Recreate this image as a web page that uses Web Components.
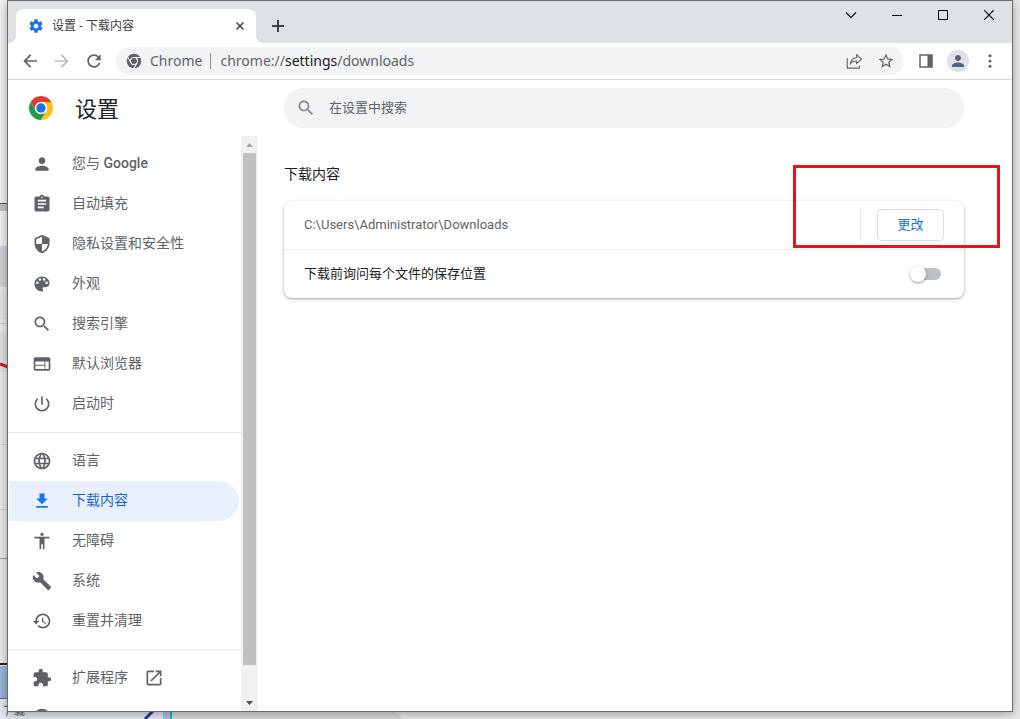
<!DOCTYPE html>
<html lang="zh-CN">
<head>
<meta charset="utf-8">
<meta name="viewport" content="width=device-width, initial-scale=1">
<title>设置 - 下载内容</title>
<style>
  html, body { height: 100%; margin: 0; }
  body {
    font-family: Roboto, "Noto Sans CJK SC", sans-serif;
    font-size: 14px; font-weight: 400; line-height: 20px;
    color: #202124; background: #ebebeb; overflow: hidden;
  }
  menu-item b { font-weight: 500; }
</style>
</head>
<body>
<desktop-view>
  <desktop-backdrop slot="backdrop"></desktop-backdrop>
  <browser-window>
    <tab-strip slot="tabs">设置 - 下载内容</tab-strip>
    <browser-toolbar slot="toolbar"></browser-toolbar>
    <settings-page>
      <settings-menu slot="menu">
        <menu-item icon="person">您与 <b>Google</b></menu-item>
        <menu-item icon="assignment">自动填充</menu-item>
        <menu-item icon="security">隐私设置和安全性</menu-item>
        <menu-item icon="palette">外观</menu-item>
        <menu-item icon="search">搜索引擎</menu-item>
        <menu-item icon="web">默认浏览器</menu-item>
        <menu-item icon="power">启动时</menu-item>
        <menu-separator></menu-separator>
        <menu-item icon="language">语言</menu-item>
        <menu-item icon="download" active>下载内容</menu-item>
        <menu-item icon="accessibility">无障碍</menu-item>
        <menu-item icon="build">系统</menu-item>
        <menu-item icon="restore">重置并清理</menu-item>
        <menu-separator></menu-separator>
        <menu-item icon="extension" external>扩展程序</menu-item>
        <menu-item icon="chromeMono"></menu-item>
      </settings-menu>
      <downloads-section></downloads-section>
    </settings-page>
  </browser-window>
</desktop-view>

<script>
const ICONS = {
  person: '<path d="M12 12c2.21 0 4-1.79 4-4s-1.79-4-4-4-4 1.79-4 4 1.79 4 4 4zm0 2c-2.67 0-8 1.34-8 4v2h16v-2c0-2.66-5.33-4-8-4z"/>',
  assignment: '<path d="M19 3h-4.18C14.4 1.84 13.3 1 12 1c-1.3 0-2.4.84-2.82 2H5c-1.1 0-2 .9-2 2v14c0 1.1.9 2 2 2h14c1.1 0 2-.9 2-2V5c0-1.1-.9-2-2-2zm-7 0c.55 0 1 .45 1 1s-.45 1-1 1-1-.45-1-1 .45-1 1-1zm2 14H7v-2h7v2zm3-4H7v-2h10v2zm0-4H7V7h10v2z"/>',
  security: '<path d="M12 1L3 5v6c0 5.55 3.84 10.74 9 12 5.16-1.26 9-6.45 9-12V5l-9-4zm0 10.99h7c-.53 4.12-3.28 7.79-7 8.94V12H5V6.3l7-3.11v8.8z"/>',
  palette: '<path d="M12 3c-4.97 0-9 4.03-9 9s4.03 9 9 9c.83 0 1.5-.67 1.5-1.5 0-.39-.15-.74-.39-1.01-.23-.26-.38-.61-.38-.99 0-.83.67-1.5 1.5-1.5H16c2.76 0 5-2.24 5-5 0-4.42-4.03-8-9-8zm-5.5 9c-.83 0-1.5-.67-1.5-1.5S5.67 9 6.5 9 8 9.67 8 10.5 7.33 12 6.5 12zm3-4C8.67 8 8 7.33 8 6.5S8.67 5 9.5 5s1.5.67 1.5 1.5S10.33 8 9.5 8zm5 0c-.83 0-1.5-.67-1.5-1.5S13.67 5 14.5 5s1.5.67 1.5 1.5S15.33 8 14.5 8zm3 4c-.83 0-1.5-.67-1.5-1.5S16.67 9 17.5 9s1.5.67 1.5 1.5-.67 1.5-1.5 1.5z"/>',
  search: '<path d="M15.5 14h-.79l-.28-.27C15.41 12.59 16 11.11 16 9.5 16 5.91 13.09 3 9.5 3S3 5.91 3 9.5 5.91 16 9.5 16c1.61 0 3.09-.59 4.23-1.57l.27.28v.79l5 4.99L20.49 19l-4.99-5zm-6 0C7.01 14 5 11.99 5 9.5S7.01 5 9.5 5 14 7.01 14 9.5 11.99 14 9.5 14z"/>',
  web: '<path d="M20 4H4c-1.1 0-1.99.9-1.99 2L2 18c0 1.1.9 2 2 2h16c1.1 0 2-.9 2-2V6c0-1.1-.9-2-2-2zm-5 14H4v-4h11v4zm0-5H4V9h11v4zm5 5h-4V9h4v9z"/>',
  power: '<path d="M13 3h-2v10h2V3zm4.83 2.17l-1.42 1.42C17.99 7.86 19 9.81 19 12c0 3.87-3.13 7-7 7s-7-3.13-7-7c0-2.19 1.01-4.14 2.58-5.42L6.17 5.17C4.23 6.82 3 9.26 3 12c0 4.97 4.03 9 9 9s9-4.03 9-9c0-2.74-1.23-5.18-3.17-6.83z"/>',
  language: '<path d="M11.99 2C6.47 2 2 6.48 2 12s4.47 10 9.99 10C17.52 22 22 17.52 22 12S17.52 2 11.99 2zm6.93 6h-2.95c-.32-1.25-.78-2.45-1.38-3.56 1.84.63 3.37 1.91 4.33 3.56zM12 4.04c.83 1.2 1.48 2.53 1.91 3.96h-3.82c.43-1.43 1.08-2.76 1.91-3.96zM4.26 14C4.1 13.36 4 12.69 4 12s.1-1.36.26-2h3.38c-.08.66-.14 1.32-.14 2 0 .68.06 1.34.14 2H4.26zm.82 2h2.95c.32 1.25.78 2.45 1.38 3.56-1.84-.63-3.37-1.9-4.33-3.56zm2.95-8H5.08c.96-1.66 2.49-2.93 4.33-3.56C8.81 5.55 8.35 6.75 8.03 8zM12 19.96c-.83-1.2-1.48-2.53-1.91-3.96h3.82c-.43 1.43-1.08 2.76-1.91 3.96zM14.34 14H9.66c-.09-.66-.16-1.32-.16-2 0-.68.07-1.35.16-2h4.68c.09.65.16 1.32.16 2 0 .68-.07 1.34-.16 2zm.25 5.56c.6-1.11 1.06-2.31 1.38-3.56h2.95c-.96 1.65-2.49 2.93-4.33 3.56zM16.36 14c.08-.66.14-1.32.14-2 0-.68-.06-1.34-.14-2h3.38c.16.64.26 1.31.26 2s-.1 1.36-.26 2h-3.38z"/>',
  download: '<path d="M19 9h-4V3H9v6H5l7 7 7-7zM5 18v2h14v-2H5z"/>',
  accessibility: '<path d="M12 2c1.1 0 2 .9 2 2s-.9 2-2 2-2-.9-2-2 .9-2 2-2zm9 7h-6v13h-2v-6h-2v6H9V9H3V7h18v2z"/>',
  build: '<path d="M22.7 19l-9.1-9.1c.9-2.3.4-5-1.5-6.9-2-2-5-2.4-7.4-1.3L9 6 6 9 1.6 4.7C.4 7.1.9 10.1 2.9 12.1c1.9 1.9 4.6 2.4 6.9 1.5l9.1 9.1c.4.4 1 .4 1.4 0l2.3-2.3c.5-.4.5-1.1.1-1.4z"/>',
  restore: '<path d="M13 3c-4.97 0-9 4.03-9 9H1l3.89 3.89.07.14L9 12H6c0-3.87 3.13-7 7-7s7 3.13 7 7-3.13 7-7 7c-1.93 0-3.68-.79-4.94-2.06l-1.42 1.42C8.27 19.99 10.51 21 13 21c4.97 0 9-4.03 9-9s-4.03-9-9-9zm-1 5v5l4.28 2.54.72-1.21-3.5-2.08V8H12z"/>',
  extension: '<path d="M20.5 11H19V7c0-1.1-.9-2-2-2h-4V3.5C13 2.12 11.88 1 10.5 1S8 2.12 8 3.5V5H4c-1.1 0-1.99.9-1.99 2v3.8H3.5c1.49 0 2.7 1.21 2.7 2.7s-1.21 2.7-2.7 2.7H2V20c0 1.1.9 2 2 2h3.8v-1.5c0-1.49 1.21-2.7 2.7-2.7 1.49 0 2.7 1.21 2.7 2.7V22H17c1.1 0 2-.9 2-2v-4h1.5c1.38 0 2.5-1.12 2.5-2.5S21.88 11 20.5 11z"/>',
  open: '<path d="M19 19H5V5h7V3H5c-1.11 0-2 .9-2 2v14c0 1.1.89 2 2 2h14c1.1 0 2-.9 2-2v-7h-2v7zM14 3v2h3.59l-9.83 9.83 1.41 1.41L19 6.41V10h2V3h-7z"/>',
  gear: '<path d="M19.43 12.98c.04-.32.07-.64.07-.98s-.03-.66-.07-.98l2.11-1.65c.19-.15.24-.42.12-.64l-2-3.46c-.12-.22-.39-.3-.61-.22l-2.49 1c-.52-.4-1.08-.73-1.69-.98l-.38-2.65C14.46 2.18 14.25 2 14 2h-4c-.25 0-.46.18-.49.42l-.38 2.65c-.61.25-1.17.59-1.69.98l-2.49-1c-.23-.09-.49 0-.61.22l-2 3.46c-.13.22-.07.49.12.64l2.11 1.65c-.04.32-.07.65-.07.98s.03.66.07.98l-2.11 1.65c-.19.15-.24.42-.12.64l2 3.46c.12.22.39.3.61.22l2.49-1c.52.4 1.08.73 1.69.98l.38 2.65c.03.24.24.42.49.42h4c.25 0 .46-.18.49-.42l.38-2.65c.61-.25 1.17-.59 1.69-.98l2.49 1c.23.09.49 0 .61-.22l2-3.46c.12-.22.07-.49-.12-.64l-2.11-1.65zM12 15.5c-1.93 0-3.5-1.57-3.5-3.5s1.57-3.5 3.5-3.5 3.5 1.57 3.5 3.5-1.57 3.5-3.5 3.5z"/>',
  back: '<path d="M20.5 11H7.83l5.59-5.59L12 4l-8 8 8 8 1.41-1.41L7.83 13H20.5z"/>',
  forward: '<path d="M3.5 11h12.67l-5.59-5.59L12 4l8 8-8 8-1.41-1.41L16.17 13H3.5z"/>',
  reload: '<path d="M17.65 6.35C16.2 4.9 14.21 4 12 4c-4.42 0-7.99 3.58-7.99 8s3.57 8 7.99 8c3.73 0 6.84-2.55 7.73-6h-2.08c-.82 2.33-3.04 4-5.65 4-3.31 0-6-2.69-6-6s2.69-6 6-6c1.66 0 3.14.69 4.22 1.78L13 11h7V4l-2.35 2.35z"/>',
  star: '<path d="M22 9.24l-7.19-.62L12 2 9.19 8.63 2 9.24l5.46 4.73L5.82 21 12 17.27 18.18 21l-1.63-7.03L22 9.24zM12 15.4l-3.76 2.27 1-4.28-3.32-2.88 4.38-.38L12 6.1l1.71 4.04 4.38.38-3.32 2.88 1 4.28L12 15.4z"/>',
  share: '<g fill="none" stroke="currentColor" stroke-width="1.5"><path d="M3 8v13.500h16v-3.500"/><path d="M15.500 3.500l6.500 6-6.500 6v-3.500c-4.500 0-7 1.300-8.500 4.200.5-5 3.500-8 8.500-8.800z" stroke-linejoin="round"/></g>',
  side: '<path fill-rule="evenodd" d="M3 3h18v18H3zm2 2v14h9V5z"/>',
  dots: '<circle cx="12" cy="5" r="2"/><circle cx="12" cy="12" r="2"/><circle cx="12" cy="19" r="2"/>',
  close: '<path d="M5 5l14 14M19 5L5 19" stroke="currentColor" stroke-width="3"/>',
  plus: '<path d="M12 3v18M3 12h18" stroke="currentColor" stroke-width="3"/>',
  chromeMono: '<circle cx="12" cy="12" r="11"/><g fill="none" stroke="var(--cut,#fff)" stroke-width="1.7"><circle cx="12" cy="12" r="5.3"/><path d="M12 6.700h11M7.400 14.600L2 5.200M16.600 14.600L11.200 24"/></g>',
  chrome: '<g><path fill="#e33b2e" d="M12 6h10.390A12 12 0 0 0 1.610 6L6.800 15A6 6 0 0 1 12 6z"/><path fill="#279847" d="M17.200 15L12 24A12 12 0 0 1 1.610 6L6.800 15a6 6 0 0 0 10.400 0z"/><path fill="#fcc219" d="M22.390 6A12 12 0 0 1 12 24l5.200-9A6 6 0 0 0 12 6z"/><circle cx="12" cy="12" r="5.900" fill="#fff"/><circle cx="12" cy="12" r="4.700" fill="#1a73e8"/></g>',
};
const svg = (name, size) =>
  `<svg width="${size}" height="${size}" viewBox="0 0 24 24" fill="currentColor" aria-hidden="true">${ICONS[name]}</svg>`;

const BASE = `:host,*{box-sizing:border-box} svg{display:block;flex:none}
  button{font:inherit;color:inherit;border:0;padding:0;margin:0;background:none;display:grid;place-items:center}`;

function define(tag, render) {
  customElements.define(tag, class extends HTMLElement {
    constructor() { super(); this.attachShadow({ mode: 'open' }); }
    connectedCallback() {
      const t = document.createElement('template');
      t.innerHTML = `<style>${BASE}</style>` + render(this);
      this.shadowRoot.replaceChildren(t.content.cloneNode(true));
    }
  });
}

define('desktop-view', () => `
  <style>
    :host{display:flex;position:relative;height:100vh;padding:0 7px 7px;overflow:hidden}
    ::slotted(browser-window){flex:1}
    ::slotted(desktop-backdrop){position:absolute;inset:0}
  </style>
  <slot name="backdrop"></slot><slot></slot>`);

/* Edges of the other windows that show around the browser. */
define('desktop-backdrop', () => `
  <style>
    :host{display:block}
    .edge{width:100%;height:100%}
    text{font:italic 12px "Noto Sans CJK SC",sans-serif;fill:#555}
  </style>
  <svg class="edge" aria-hidden="true">
    <rect width="8" height="204" fill="#f3f3f3"/>
    <rect y="203" width="8" height="1" fill="#555"/>
    <rect y="204" width="8" height="7" fill="#c4c4c4"/>
    <rect y="211" width="8" height="35" fill="#f1f1f1"/>
    <rect y="246" width="8" height="41" fill="#cfd3d9"/>
    <rect y="291" width="8" height="28" fill="#e3e5e8"/>
    <rect y="323" width="8" height="1" fill="#c8c8c8"/>
    <rect y="332" width="8" height="40" fill="#e1e3e6"/>
    <path d="M0 364l8 3" stroke="#e0101a" stroke-width="3"/>
    <path d="M0 444.500h8M0 509.500h8" stroke="#d5d5d5"/>
    <rect y="558" width="8" height="1" fill="#999"/>
    <rect y="663" width="8" height="2" fill="#222"/>
    <rect y="666" width="8" height="32" fill="#9db7d8"/>
    <rect y="698" width="8" height="1" fill="#667"/>
    <rect y="699" width="163" height="20" fill="#e4ebf5"/>
    <rect x="163" y="705" width="8" height="14" fill="#b0c8e4"/>
    <rect x="170" y="705" width="2" height="14" fill="#16b4d0"/>
    <rect x="172" y="705" width="848" height="14" fill="#ebebeb"/>
    <path d="M172 719v-7h223l8 7z" fill="#dcdcdc"/>
    <path d="M145 719l8-8" stroke="#2a3b90" stroke-width="3"/>
    <text x="1" y="715">下载</text>
  </svg>`);

define('browser-window', () => `
  <style>
    :host{display:flex;flex-direction:column;position:relative;min-width:0;background:#fff;
      border:1px solid #6b6b6b;box-shadow:0 2px 10px rgba(0,0,0,.35);overflow:hidden}
    ::slotted(settings-page){flex:1;min-height:0}
  </style>
  <slot name="tabs"></slot><slot name="toolbar"></slot><slot></slot>`);

define('tab-strip', () => `
  <style>
    :host{display:flex;height:42px;background:#dee1e6;padding-left:8px;color:#3c4043}
    .tab{position:relative;display:flex;align-items:center;align-self:flex-end;width:240px;height:34px;
      padding:0 8px 0 12px;gap:8px;background:#fff;border-radius:8px 8px 0 0;
      font-family:"Open Sans","Noto Sans CJK SC",sans-serif;font-size:12px}
    .tab::before,.tab::after{content:"";position:absolute;bottom:0;width:8px;height:8px}
    .tab::before{left:-8px;background:radial-gradient(circle at 0 0,transparent 8px,#fff 8px)}
    .tab::after{right:-8px;background:radial-gradient(circle at 100% 0,transparent 8px,#fff 8px)}
    .title{flex:1}
    .gear{color:#1a73e8}
    button{width:16px;height:16px}
    .new{width:28px;height:28px;margin:11px 0 0 8px}
    .controls{display:flex;margin-left:auto;color:#000}
    .controls button{width:46px;height:28px}
  </style>
  <div class="tab"><span class="gear">${svg('gear', 16)}</span><span class="title"><slot></slot></span>
    <button aria-label="关闭标签页">${svg('close', 12)}</button></div>
  <button class="new" aria-label="新标签页">${svg('plus', 16)}</button>
  <div class="controls">
    <button aria-label="搜索标签页"><svg width="12" height="12" fill="none" stroke="#111" stroke-width="1.2"><path d="M1 3.500l5 5 5-5"/></svg></button>
    <button aria-label="最小化"><svg width="10" height="10" fill="none" stroke="#000"><path d="M0 5.500h10"/></svg></button>
    <button aria-label="最大化"><svg width="10" height="10" fill="none" stroke="#000"><path d="M.5.5h9v9h-9z"/></svg></button>
    <button aria-label="关闭"><svg width="10" height="10" fill="none" stroke="#000" stroke-width="1.2"><path d="M0 0l10 10M10 0L0 10"/></svg></button>
  </div>`);

define('browser-toolbar', () => `
  <style>
    :host{display:flex;align-items:center;height:37px;padding:0 6px;border-bottom:1px solid #d9dadc;color:#5f6368}
    button{width:32px;height:28px}
    button:disabled{color:#babcbe}
    .omni{--cut:#f1f3f4;display:flex;align-items:center;flex:1;height:28px;margin:0 6px;padding:0 2px 0 10px;
      background:#f1f3f4;border-radius:14px;font:14px/20px "Noto Sans","Noto Sans CJK SC",sans-serif}
    .name{margin-left:8px;padding-right:8px}
    .rule{width:1px;height:16px;background:#8f9398}
    .url{flex:1;margin-left:9px;outline:0;white-space:nowrap}
    .url b{font-weight:400;color:#202124}
    .avatar span{display:grid;place-items:center;width:22px;height:22px;border-radius:50%;background:#dee1e6;color:#56607a}
  </style>
  <button aria-label="后退">${svg('back', 20)}</button>
  <button aria-label="前进" disabled>${svg('forward', 20)}</button>
  <button aria-label="重新加载">${svg('reload', 20)}</button>
  <div class="omni">${svg('chromeMono', 16)}<span class="name">Chrome</span><span class="rule"></span>
    <div class="url" role="textbox" aria-label="地址" contenteditable="true" spellcheck="false">chrome://<b>settings</b>/downloads</div>
    <button aria-label="分享">${svg('share', 18)}</button>
    <button aria-label="加入书签">${svg('star', 18)}</button></div>
  <button aria-label="侧边栏">${svg('side', 18)}</button>
  <button class="avatar" aria-label="个人资料"><span>${svg('person', 18)}</span></button>
  <button aria-label="更多">${svg('dots', 18)}</button>`);

define('settings-page', () => `
  <style>
    :host{display:grid;grid-template:56px minmax(0,1fr) / 250px minmax(0,1fr)}
    header{display:flex;align-items:center;gap:22px;padding-left:21px}
    h1{margin:0;padding-top:3px;font-size:22px;font-weight:400;line-height:32px}
    .search{display:flex;align-items:center;align-self:center;gap:13px;height:40px;margin:0 48px 0 26px;
      padding:0 20px 0 12px;border-radius:20px;background:#f1f3f4;color:#80868b}
    input{flex:1;min-width:0;border:0;outline:0;padding:0;background:none;font:inherit;font-size:13px;color:#202124}
    input::placeholder{color:#5f6368;opacity:1}
    main{padding:27px 48px 0 26px}
  </style>
  <header>${svg('chrome', 24)}<h1>设置</h1></header>
  <div class="search">${svg('search', 20)}<input type="search" aria-label="在设置中搜索" placeholder="在设置中搜索"></div>
  <slot name="menu"></slot>
  <main><slot></slot></main>`);

define('settings-menu', () => `
  <style>
    :host{display:flex;min-height:0;overflow:hidden}
    nav{flex:1;padding-top:8px;min-width:0}
    .bar{display:flex;flex-direction:column;width:17px;background:#f1f1f1}
    .arrow{display:grid;place-items:center;height:17px;flex:none}
    .thumb{flex:512;margin:0 2px;background:#c1c1c1}
    .rest{flex:29}
  </style>
  <nav aria-label="设置"><slot></slot></nav>
  <div class="bar" aria-hidden="true">
    <div class="arrow"><svg width="7" height="4" fill="#a3a3a3"><path d="M0 4h7L3.500 0z"/></svg></div>
    <div class="thumb"></div><div class="rest"></div>
    <div class="arrow"><svg width="7" height="4" fill="#505050"><path d="M0 0h7L3.500 4z"/></svg></div>
  </div>`);

define('menu-separator', () => `<style>:host{display:block;height:1px;margin:8px 0;background:#e8e8e9}</style>`);

define('menu-item', el => `
  <style>
    :host{display:block;--cut:#fff}
    a{display:flex;align-items:center;height:40px;margin:0 2px 0 1px;padding-left:23px;
      border-radius:0 20px 20px 0;color:#5f6368;text-decoration:none}
    .label{margin-left:20px;padding-bottom:2px}
    .ext{margin-left:16px}
    :host([active]) a{background:#e8f0fe;color:#1967d2}
    :host([active]) svg{color:#1a73e8}
  </style>
  <a href="#${el.getAttribute('icon')}" ${el.textContent ? '' : 'aria-label="关于 Chrome"'}>${svg(el.getAttribute('icon'), 20)}
    <span class="label"><slot></slot></span>${el.hasAttribute('external') ? `<span class="ext">${svg('open', 20)}</span>` : ''}</a>`);

define('downloads-section', () => `
  <style>
    :host{display:block}
    h2{margin:0 0 16px;font-size:14px;font-weight:400;line-height:22px}
    .card{position:relative;border-radius:8px;background:#fff;font-size:13px;
      box-shadow:0 1px 2px rgba(60,64,67,.3),0 1px 3px 1px rgba(60,64,67,.15)}
    .row{display:flex;align-items:center;height:48px;padding:0 20px}
    .row+.row{border-top:1px solid #ebebec;height:49px}
    .text{flex:1}
    .path{color:#5f6368}
    .rule{width:1px;height:32px;margin-right:16px;background:#e8e8e9}
    .change{width:67px;height:32px;border:1px solid #dadce0;border-radius:4px;color:#1a73e8}
    input{appearance:none;position:relative;width:28px;height:12px;margin:0 3px 0 0;border-radius:6px;background:#bdc1c6}
    input::before{content:"";position:absolute;left:-3px;top:-2px;width:16px;height:16px;border-radius:50%;
      background:#fff;box-shadow:0 1px 3px rgba(0,0,0,.4)}
    .mark{position:absolute;right:-36px;top:-36px;width:207px;height:83px;border:3px solid #ed1119;pointer-events:none}
  </style>
  <h2>下载内容</h2>
  <div class="card">
    <div class="row"><span class="text path">C:\\Users\\Administrator\\Downloads</span><span class="rule"></span>
      <button class="change">更改</button></div>
    <div class="row"><label class="text" for="ask">下载前询问每个文件的保存位置</label><input type="checkbox" role="switch" id="ask"></div>
    <div class="mark"></div>
  </div>`);
</script>
</body>
</html>
